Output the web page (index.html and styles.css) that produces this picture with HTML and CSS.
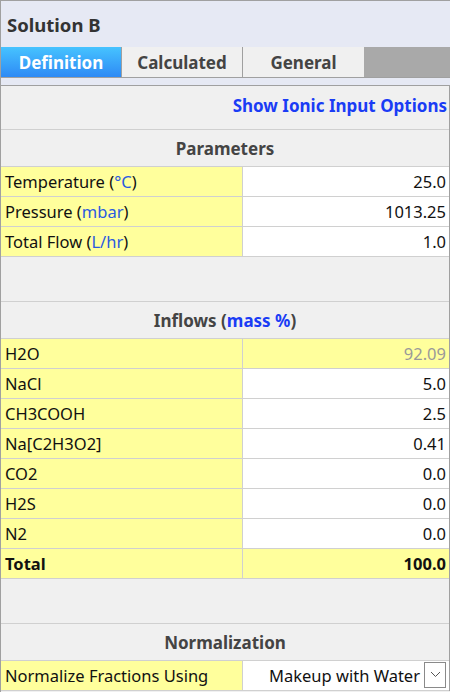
FILE: index.html
```html
<!DOCTYPE html>
<html lang="en">
<head>
  <meta charset="UTF-8">
  <title>Solution B</title>
  <link rel="stylesheet" href="styles.css">
</head>
<body>
<div class="panel">
  <div class="panel-title">Solution B</div>

  <!-- Tabs -->
  <div class="tabs">
    <div class="tab active">Definition</div>
    <div class="tab">Calculated</div>
    <div class="tab">General</div>
    <div class="tab-fill"></div>
  </div>
  <div class="tab-strip"></div>

  <div class="content">
    <div class="link-row"><a href="#" class="link">Show Ionic Input Options</a></div>

    <div class="section-head">Parameters</div>
    <div class="row">
      <div class="label">Temperature (<span class="unit">°C</span>)</div>
      <div class="value">25.0</div>
    </div>
    <div class="row">
      <div class="label">Pressure (<span class="unit">mbar</span>)</div>
      <div class="value">1013.25</div>
    </div>
    <div class="row">
      <div class="label">Total Flow (<span class="unit">L/hr</span>)</div>
      <div class="value">1.0</div>
    </div>

    <div class="spacer"></div>

    <div class="section-head">Inflows (<span class="unit">mass %</span>)</div>
    <div class="row">
      <div class="label">H2O</div>
      <div class="value calc">92.09</div>
    </div>
    <div class="row">
      <div class="label">NaCl</div>
      <div class="value">5.0</div>
    </div>
    <div class="row">
      <div class="label">CH3COOH</div>
      <div class="value">2.5</div>
    </div>
    <div class="row">
      <div class="label">Na[C2H3O2]</div>
      <div class="value">0.41</div>
    </div>
    <div class="row">
      <div class="label">CO2</div>
      <div class="value">0.0</div>
    </div>
    <div class="row">
      <div class="label">H2S</div>
      <div class="value">0.0</div>
    </div>
    <div class="row">
      <div class="label">N2</div>
      <div class="value">0.0</div>
    </div>
    <div class="row total">
      <div class="label">Total</div>
      <div class="value">100.0</div>
    </div>

    <div class="spacer"></div>

    <div class="section-head">Normalization</div>
    <div class="row">
      <div class="label">Normalize Fractions Using</div>
      <div class="value select">
        <span>Makeup with Water</span>
        <span class="select-btn">
          <svg width="11" height="7" viewBox="0 0 11 7"><path d="M1 1 L5.5 5.5 L10 1" fill="none" stroke="#555" stroke-width="1"/></svg>
        </span>
      </div>
    </div>
  </div>
</div>
</body>
</html>
```

FILE: styles.css
```css
* {
  box-sizing: border-box;
  margin: 0;
  padding: 0;
}

body {
  font-family: "Noto Sans", "Open Sans", sans-serif;
  font-size: 16.5px;
  color: #111;
  background: #fff;
  width: 450px;
  height: 692px;
  overflow: hidden;
}

.panel {
  border-top: 1px solid #a0a0a0;
  border-left: 1px solid #a0a0a0;
  width: 450px;
  height: 692px;
  background: #f0f0f0;
}

.panel-title {
  height: 46px;
  background: #e6e9f4;
  font-weight: bold;
  font-size: 18.5px;
  color: #333;
  padding: 0 0 0 6px;
  display: flex;
  align-items: center;
}

/* Pestañas */
.tabs {
  display: flex;
  height: 31px;
  border-bottom: 1px solid #a0a0a0;
}

.tab {
  width: 121px;
  border-right: 1px solid #a0a0a0;
  background: #f0f0f0;
  color: #444;
  font-weight: bold;
  font-size: 17px;
  display: flex;
  align-items: center;
  justify-content: center;
}

.tab.active {
  background: linear-gradient(#46c3ff, #2e8af5);
  color: #fff;
}

.tab:nth-child(3) {
  width: 121px;
  border-right: none;
}

.tab-fill {
  flex: 1;
  background: #a9a9a9;
}

.tab-strip {
  height: 8px;
  background: #e6e9f4;
  border-bottom: 1px solid #a0a0a0;
}

.content {
  border-right: 1px solid #a0a0a0;
}

.link-row {
  height: 44px;
  border-bottom: 1px solid #d0d0d0;
  display: flex;
  align-items: center;
  justify-content: flex-end;
  padding: 0 2px 4px 0;
}

.link {
  color: #1a3cf5;
  font-weight: bold;
  font-size: 17px;
  text-decoration: none;
}

.section-head {
  height: 37px;
  border-bottom: 1px solid #d0d0d0;
  display: flex;
  align-items: center;
  justify-content: center;
  font-weight: bold;
  font-size: 17px;
  color: #444;
}

.section-head .unit {
  color: #1a3cf5;
}

.row {
  display: grid;
  grid-template-columns: 242px 1fr;
  height: 30px;
  border-bottom: 1px solid #d0d0d0;
}

.label {
  background: #ffff9c;
  border-right: 1px solid #d0d0d0;
  display: flex;
  align-items: center;
  padding-left: 4px;
  white-space: pre;
}

.label .unit {
  color: #2a5ae0;
}

.value {
  background: #fff;
  display: flex;
  align-items: center;
  justify-content: flex-end;
  padding-right: 3px;
}

.value.calc {
  background: #ffff9c;
  color: #999;
}

.row.total .label,
.row.total .value {
  background: #ffff9c;
  font-weight: bold;
}

.spacer {
  height: 45px;
  border-bottom: 1px solid #d0d0d0;
}

.value.select {
  gap: 4px;
}

.select-btn {
  width: 22px;
  height: 26px;
  border: 1px solid #8a8a8a;
  background: #fff;
  display: flex;
  align-items: center;
  justify-content: center;
  margin-top: -2px;
}
```
